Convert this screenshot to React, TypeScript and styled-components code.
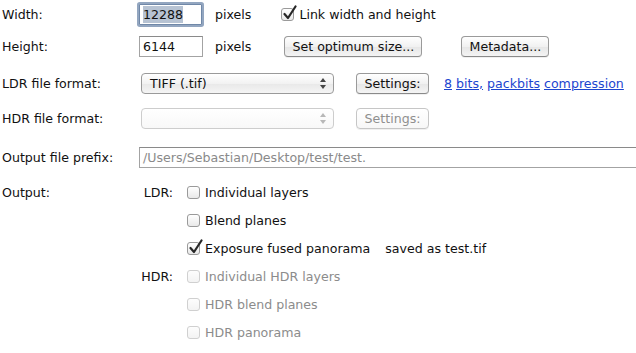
import React from "react"
import styled, { createGlobalStyle, css } from "styled-components"

const GlobalStyle = createGlobalStyle`
  html, body {
    margin: 0;
    padding: 0;
    background: #ffffff;
  }
  body {
    font-family: "DejaVu Sans", "Liberation Sans", sans-serif;
    font-size: 12.6px;
    color: #111;
    overflow: hidden;
  }
`

const Page = styled.div`
  width: 636px;
  height: 353px;
  padding-left: 2px;
  box-sizing: border-box;
  display: flex;
  flex-direction: column;
`

const Row = styled.div<{ $top: number; $h: number }>`
  display: flex;
  align-items: center;
  height: ${(p) => p.$h}px;
  margin-top: ${(p) => p.$top}px;
`

const Label = styled.div`
  width: 137px;
  flex: none;
  white-space: nowrap;
`

const Controls = styled.div`
  display: flex;
  align-items: center;
  flex: 1;
  min-width: 0;
`

const TextField = styled.div<{ $focused?: boolean; $w?: number; $disabled?: boolean; $grow?: boolean }>`
  box-sizing: border-box;
  width: ${(p) => (p.$w ? `${p.$w}px` : "auto")};
  height: 21px;
  border: 1px solid #a3a3a3;
  border-top-color: #8a8a8a;
  background: #fff;
  display: flex;
  align-items: center;
  padding-left: 3px;
  white-space: nowrap;
  overflow: hidden;
  color: ${(p) => (p.$disabled ? "#8a8a8a" : "#111")};
  ${(p) =>
    p.$grow &&
    css`
      flex: 1;
      margin-right: -4px;
    `}
  ${(p) =>
    p.$focused &&
    css`
      border: 1px solid #7088a8;
      box-shadow: 0 0 0 2px #93a6c0;
      border-radius: 1px;
    `}
`

const Selected = styled.span`
  background: #b7c3d3;
  padding: 1px 0;
`

const Unit = styled.span<{ $ml: number }>`
  margin-left: ${(p) => p.$ml}px;
`

const Button = styled.button<{ $ml: number; $w: number }>`
  margin-left: ${(p) => p.$ml}px;
  width: ${(p) => p.$w}px;
  height: 21px;
  box-sizing: border-box;
  border: 1px solid #9a9a9a;
  border-bottom-color: #8a8a8a;
  border-radius: 4px;
  background: linear-gradient(#ffffff, #f1f1f1 50%, #e6e6e6 51%, #f4f4f4);
  font: inherit;
  color: #111;
  padding: 0;
  box-shadow: 0 1px 0 rgba(0, 0, 0, 0.06);
  &:disabled {
    color: #8f8f8f;
    border-color: #c6c6c6;
    background: linear-gradient(#ffffff, #f7f7f7);
  }
`

const SelectBox = styled.div<{ $disabled?: boolean }>`
  margin-left: 2px;
  width: 193px;
  height: 21px;
  box-sizing: border-box;
  border: 1px solid ${(p) => (p.$disabled ? "#cdcdcd" : "#9a9a9a")};
  border-radius: 4px;
  background: ${(p) =>
    p.$disabled
      ? "linear-gradient(#ffffff, #f8f8f8)"
      : "linear-gradient(#ffffff, #f2f2f2 50%, #e8e8e8 51%, #f5f5f5)"};
  display: flex;
  align-items: center;
  justify-content: space-between;
  padding: 0 7px 0 8px;
  color: ${(p) => (p.$disabled ? "#999" : "#111")};
`

const Arrows = ({ disabled }: { disabled?: boolean }) => (
  <svg width="6" height="11" viewBox="0 0 6 11">
    <path d="M0 4 L3 0 L6 4 Z" fill={disabled ? "#b8b8b8" : "#444"} />
    <path d="M0 7 L3 11 L6 7 Z" fill={disabled ? "#b8b8b8" : "#444"} />
  </svg>
)

const LinkGroup = styled.span`
  margin-left: 15px;
  white-space: nowrap;
  color: #1c46cf;
`

const LinkWord = styled.a`
  color: #1c46cf;
  text-decoration: underline;
`

const Group = styled.div`
  width: 34px;
  flex: none;
  text-align: right;
  margin-right: 14px;
`

const CheckLabel = styled.label<{ $disabled?: boolean; $ml?: number }>`
  display: inline-flex;
  align-items: center;
  white-space: nowrap;
  margin-left: ${(p) => p.$ml ?? 0}px;
  color: ${(p) => (p.$disabled ? "#8c8c8c" : "#111")};
`

const Box = styled.span<{ $disabled?: boolean }>`
  position: relative;
  width: 13px;
  height: 13px;
  box-sizing: border-box;
  border: 1px solid ${(p) => (p.$disabled ? "#d0d0d0" : "#9a9a9a")};
  border-radius: 3px;
  background: ${(p) =>
    p.$disabled ? "linear-gradient(#fdfdfd, #f3f3f3)" : "linear-gradient(#ffffff, #e9e9e9)"};
  margin-right: 5px;
  flex: none;
`

const Tick = styled.svg`
  position: absolute;
  left: 1px;
  top: -4px;
`

const Note = styled.span`
  margin-left: 15px;
`

function Checkbox({
  text,
  checked,
  disabled,
  ml,
}: {
  text: string
  checked?: boolean
  disabled?: boolean
  ml?: number
}) {
  return (
    <CheckLabel $disabled={disabled} $ml={ml}>
      <Box $disabled={disabled}>
        {checked && (
          <Tick width="14" height="15" viewBox="0 0 14 15">
            <path
              d="M1.5 9 L5 13 L12.5 1.5"
              fill="none"
              stroke="#262626"
              strokeWidth="2.2"
              strokeLinecap="round"
              strokeLinejoin="round"
            />
          </Tick>
        )}
      </Box>
      {text}
    </CheckLabel>
  )
}

export default function App() {
  return (
    <Page>
      <GlobalStyle />
      <Row $top={0} $h={28}>
        <Label>Width:</Label>
        <Controls>
          <TextField $focused $w={63}>
            <Selected>12288</Selected>
          </TextField>
          <Unit $ml={13}>pixels</Unit>
          <Checkbox text="Link width and height" checked ml={30} />
        </Controls>
      </Row>
      <Row $top={4} $h={28}>
        <Label>Height:</Label>
        <Controls>
          <TextField $w={64}>6144</TextField>
          <Unit $ml={12}>pixels</Unit>
          <Button $ml={33} $w={138}>Set optimum size...</Button>
          <Button $ml={39} $w={88}>Metadata...</Button>
        </Controls>
      </Row>
      <Row $top={12} $h={22}>
        <Label>LDR file format:</Label>
        <Controls>
          <SelectBox>
            <span>TIFF (.tif)</span>
            <Arrows />
          </SelectBox>
          <Button $ml={22} $w={73}>Settings:</Button>
          <LinkGroup>
            <LinkWord>8</LinkWord> <LinkWord>bits,</LinkWord> <LinkWord>packbits</LinkWord>{" "}
            <LinkWord>compression</LinkWord>
          </LinkGroup>
        </Controls>
      </Row>
      <Row $top={13} $h={22}>
        <Label>HDR file format:</Label>
        <Controls>
          <SelectBox $disabled>
            <span />
            <Arrows disabled />
          </SelectBox>
          <Button $ml={22} $w={73} disabled>
            Settings:
          </Button>
        </Controls>
      </Row>
      <Row $top={17} $h={22}>
        <Label>Output file prefix:</Label>
        <Controls>
          <TextField $disabled $grow>
            /Users/Sebastian/Desktop/test/test.
          </TextField>
        </Controls>
      </Row>
      <Row $top={10} $h={28}>
        <Label>Output:</Label>
        <Group>LDR:</Group>
        <Checkbox text="Individual layers" />
      </Row>
      <Row $top={0} $h={28}>
        <Label />
        <Group />
        <Checkbox text="Blend planes" />
      </Row>
      <Row $top={0} $h={28}>
        <Label />
        <Group />
        <Checkbox text="Exposure fused panorama" checked />
        <Note>saved as test.tif</Note>
      </Row>
      <Row $top={0} $h={28}>
        <Label />
        <Group>HDR:</Group>
        <Checkbox text="Individual HDR layers" disabled />
      </Row>
      <Row $top={0} $h={28}>
        <Label />
        <Group />
        <Checkbox text="HDR blend planes" disabled />
      </Row>
      <Row $top={0} $h={28}>
        <Label />
        <Group />
        <Checkbox text="HDR panorama" disabled />
      </Row>
    </Page>
  )
}
